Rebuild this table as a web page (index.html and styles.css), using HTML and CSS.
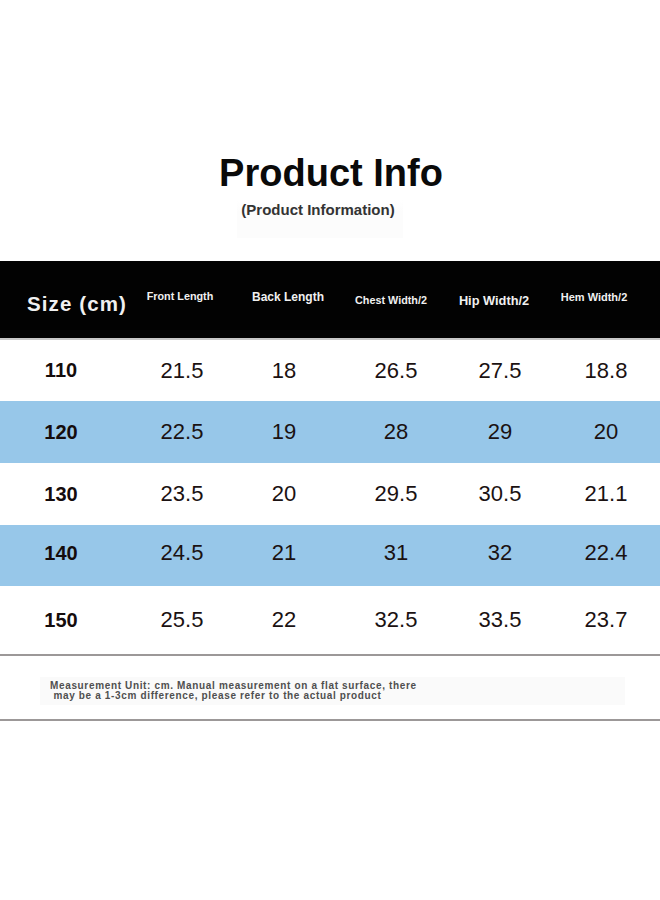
FILE: index.html
```html
<!DOCTYPE html>
<html lang="en">
<head>
<meta charset="utf-8">
<title>Product Info</title>
<link rel="stylesheet" href="styles.css">
</head>
<body>
<div class="page">
  <header class="intro">
    <h1 class="title">Product Info</h1>
    <div class="subtitle"><span>(Product Information)</span></div>
  </header>

  <div class="table">
    <div class="row head">
      <div class="cell c1 h-size">Size (cm)</div>
      <div class="cell c2 h-front">Front Length</div>
      <div class="cell c3 h-back">Back Length</div>
      <div class="cell c4 h-chest">Chest Width/2</div>
      <div class="cell c5 h-hip">Hip Width/2</div>
      <div class="cell c6 h-hem">Hem Width/2</div>
    </div>
    <div class="row r1">
      <div class="cell c1 size">110</div>
      <div class="cell c2">21.5</div>
      <div class="cell c3">18</div>
      <div class="cell c4">26.5</div>
      <div class="cell c5">27.5</div>
      <div class="cell c6">18.8</div>
    </div>
    <div class="row r2 blue">
      <div class="cell c1 size">120</div>
      <div class="cell c2">22.5</div>
      <div class="cell c3">19</div>
      <div class="cell c4">28</div>
      <div class="cell c5">29</div>
      <div class="cell c6">20</div>
    </div>
    <div class="row r3">
      <div class="cell c1 size">130</div>
      <div class="cell c2">23.5</div>
      <div class="cell c3">20</div>
      <div class="cell c4">29.5</div>
      <div class="cell c5">30.5</div>
      <div class="cell c6">21.1</div>
    </div>
    <div class="row r4 blue">
      <div class="cell c1 size">140</div>
      <div class="cell c2">24.5</div>
      <div class="cell c3">21</div>
      <div class="cell c4">31</div>
      <div class="cell c5">32</div>
      <div class="cell c6">22.4</div>
    </div>
    <div class="row r5">
      <div class="cell c1 size">150</div>
      <div class="cell c2">25.5</div>
      <div class="cell c3">22</div>
      <div class="cell c4">32.5</div>
      <div class="cell c5">33.5</div>
      <div class="cell c6">23.7</div>
    </div>
  </div>

  <div class="note">
    <p class="note-text">Measurement Unit: cm. Manual measurement on a flat surface, there<br>&nbsp;may be a 1-3cm difference, please refer to the actual product</p>
  </div>
</div>
</body>
</html>
```

FILE: styles.css
```css
* { box-sizing: border-box; }

html, body {
  margin: 0;
  padding: 0;
  background: #ffffff;
}

body {
  font-family: "Liberation Sans", Arial, sans-serif;
  color: #1b1212;
}

.page {
  width: 660px;
  height: 900px;
}

.intro {
  padding-top: 153px;
  height: 261px;
  display: flex;
  flex-direction: column;
  align-items: center;
}

.title {
  margin: 0;
  font-size: 38px;
  line-height: 40px;
  font-weight: 700;
  color: #0a0a0a;
  padding-left: 2px;
}

.subtitle {
  margin-top: 7px;
  margin-right: 20px;
  padding: 2px 8px 20px 4px;
  background: linear-gradient(#ffffff, #fcfcfc 30%, #fcfcfc);
}

.subtitle span {
  display: block;
  font-size: 15px;
  line-height: 16px;
  font-weight: 700;
  color: #333333;
}

.table {
  width: 660px;
}

.row {
  display: grid;
  grid-template-columns: 122px 120px 84px 140px 68px 126px;
}

.cell {
  display: flex;
  justify-content: center;
  align-items: center;
  white-space: nowrap;
  font-size: 22px;
}

.head {
  background: #020202;
  height: 79px;
  border-bottom: 2px solid #c9c9c9;
  color: #f0f0f0;
}

.head .cell {
  font-weight: 700;
}

.h-size {
  font-size: 20.5px;
  padding-left: 32px;
  margin-top: 8px;
  letter-spacing: 1.1px;
}

.h-front {
  font-size: 10.8px;
  margin-bottom: 8px;
  padding-right: 4px;
}

.h-back {
  font-size: 12px;
  margin-bottom: 6px;
  padding-left: 8px;
}

.h-chest {
  font-size: 10.8px;
  padding-right: 10px;
}

.h-hip {
  font-size: 12.8px;
  margin-top: 2px;
  padding-right: 12px;
}

.h-hem {
  font-size: 11px;
  margin-bottom: 5px;
  padding-right: 6px;
}

.size {
  font-weight: 700;
  font-size: 20px;
  color: #150c0c;
}

.c6:not(.h-hem) {
  padding-left: 18px;
}

.blue {
  background: #97c7e9;
}

.r1 { height: 61px; }
.r2 { height: 62px; }
.r3 { height: 62px; }
.r4 { height: 61px; }
.r4 .cell { margin-bottom: 5px; }
.r5 { height: 68px; }

.note {
  height: 67px;
  border-top: 2px solid #9c9898;
  border-bottom: 2px solid #9c9898;
  padding: 21px 0 0 40px;
}

.note-text {
  margin: 0;
  width: 585px;
  padding: 4px 0 4px 10px;
  background: #fafafa;
  font-size: 10px;
  line-height: 10px;
  font-weight: 700;
  letter-spacing: 0.65px;
  color: #4f4f4f;
}
```
